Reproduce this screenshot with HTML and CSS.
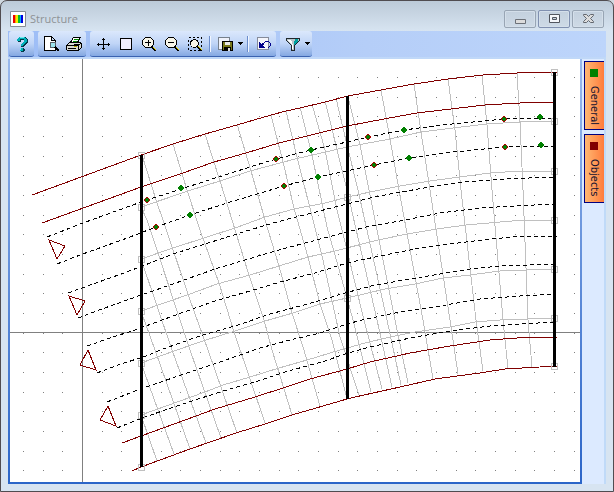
FILE: index.html
```html
<!DOCTYPE html>
<html lang="en">
<head>
<meta charset="utf-8">
<title>Structure</title>
<link rel="stylesheet" href="styles.css">
</head>
<body>
<main class="window">
  <header class="titlebar">
    <svg class="app-icon" viewBox="0 0 16 16" aria-hidden="true">
      <path fill="#fff" stroke="#858d94" d="M.5.5h15v15H.5z"/>
      <path fill="#e00" d="M3 4h2v8H3z"/><path fill="#f90" d="M5 4h1v8H5z"/><path fill="#ee0" d="M6 4h2v8H6z"/><path fill="#0b3" d="M8 4h2v8H8z"/><path fill="#0af" d="M10 4h1v8h-1z"/><path fill="#00d" d="M11 4h2v8h-2z"/>
    </svg>
    <h1 class="title">Structure</h1>
    <div class="controls">
      <button class="control" type="button" aria-label="Minimize"><svg viewBox="0 0 14 12"><path fill="#dcdcdc" stroke="#6c7178" d="M2.500 6.500h10v4h-10z"/></svg></button>
      <button class="control control-max" type="button" aria-label="Maximize"><svg viewBox="0 0 14 12"><path fill="#f4f6fa" stroke="#52565f" fill-rule="evenodd" d="M2.500 1.500h10v8h-10zM5.500 4.500h4v2h-4z"/></svg></button>
      <button class="control" type="button" aria-label="Close"><svg viewBox="0 0 14 12"><path fill="#dcdcdc" stroke="#62676e" d="M2.500 1.500h3l2 2 2-2h3v1l-3 3 3 3v1h-3l-2-2-2 2h-3v-1l3-3-3-3z"/></svg></button>
    </div>
  </header>

  <div class="toolbar">
    <div class="group">
      <button class="tool" type="button" aria-label="Help"><svg viewBox="0 0 16 16" shape-rendering="crispEdges"><path fill="#003848" d="M6 1h6v1h1v1h1v4h-1v1h-1v1h-1v1h-1v1H7V9h1V8h1V7h1V4H7v2H4V3h1V2h1zM7 12h3v1h1v2h-1v1H7z"/><path fill="#00b0b8" d="M5 1h6v1h1v1h1v3h-1v1h-1v1h-1v1H9v1H7V8h1V7h1V6h1V3H6v2H3V3h1V2h1zM6 12h3v3H6z"/><path fill="#6eeaf0" d="M6 1h4v1H6zM6 12h1v2H6z"/></svg></button>
    </div>
    <div class="group">
      <button class="tool" type="button" aria-label="Print preview"><svg viewBox="0 0 16 16" shape-rendering="crispEdges"><path fill="#fff" stroke="#000" d="M1.500.5h7l4 4v10h-11zM8.500.5v4h4"/><circle cx="10" cy="9" r="3" fill="#9ce4ee" stroke="#5a6067"/><path stroke="#000" stroke-width="2" d="M12 11l4 4"/></svg></button>
      <button class="tool" type="button" aria-label="Print"><svg viewBox="0 0 16 16" shape-rendering="crispEdges"><path fill="#d8d8d0" stroke="#000" d="M.5 9.500l3-3h10l2 1v4l-3 3h-11l-1-1z"/><path fill="#fff" stroke="#000" d="M4.500 6.500l3-5h7l-3 5z"/><path stroke="#080" d="M8 3.500h5M7 5.500h4"/><path stroke="#000" d="M0 9.500h12l3-2M12.500 10v4M2 12.500h8"/><path stroke="#bba900" d="M8 10.500h3"/></svg></button>
    </div>
    <div class="group">
      <button class="tool" type="button" aria-label="Move"><svg viewBox="0 0 16 16" shape-rendering="crispEdges"><path stroke="#000" d="M8.500 2v12M2 8.500h13M7 3.500h3M7 12.500h3M3.500 7v3M13.500 7v3"/></svg></button>
      <button class="tool" type="button" aria-label="Full view"><svg viewBox="0 0 16 16" shape-rendering="crispEdges"><path fill="#f1efff" stroke="#000" d="M2.500 2.500h11v11h-11z"/></svg></button>
      <button class="tool" type="button" aria-label="Zoom in"><svg viewBox="0 0 16 16" shape-rendering="crispEdges"><path fill="#f7f5e8" stroke="#000" d="M4.500 1.500h5l3 3v4l-3 3h-5l-3-3v-4z"/><path stroke="#000" d="M4 6.500h6M7.500 4v6"/><path stroke="#000" stroke-width="2" d="M11 11l4 4"/><path stroke="#eedc00" d="M12 11l3 3"/></svg></button>
      <button class="tool" type="button" aria-label="Zoom out"><svg viewBox="0 0 16 16" shape-rendering="crispEdges"><path fill="#f7f5e8" stroke="#000" d="M4.500 1.500h5l3 3v4l-3 3h-5l-3-3v-4z"/><path stroke="#000" d="M4 6.500h6"/><path stroke="#000" stroke-width="2" d="M11 11l4 4"/><path stroke="#eedc00" d="M12 11l3 3"/></svg></button>
      <button class="tool" type="button" aria-label="Zoom to area"><svg viewBox="0 0 16 16" shape-rendering="crispEdges"><path fill="none" stroke="#000" stroke-dasharray="2 2" d="M1.500 1.500h13v13h-13z"/><circle cx="7.500" cy="7.500" r="4" fill="#f7f5e8" stroke="#000"/><path stroke="#000" stroke-width="2" d="M10 10l5 5"/><path stroke="#eedc00" d="M11 10l4 4"/></svg></button>
      <span class="separator"></span>
      <button class="tool" type="button" aria-label="Save"><svg viewBox="0 0 16 16" shape-rendering="crispEdges"><path fill="#eef1fb" stroke="#77808c" d="M.5 1.500h11v12H.5z"/><path fill="#77771a" stroke="#000" d="M4.500 5.500h10v9h-10z"/><path fill="#e8e8e8" d="M7 6h5v3H7z"/><path d="M6 11h7v4H6z"/><path fill="#ddd" d="M10 12h2v3h-2z"/></svg></button>
      <button class="caret" type="button" aria-label="Save options"><svg viewBox="0 0 5 3" shape-rendering="crispEdges"><path d="M0 0h5v1H0zM1 1h3v1H1zM2 2h1v1H2z"/></svg></button>
      <span class="separator"></span>
      <button class="tool" type="button" aria-label="Undo"><svg viewBox="0 0 16 16" shape-rendering="crispEdges"><path fill="#f4f5fc" stroke="#858b9a" d="M1.500 1.500h11v12h-11z"/><path fill="#00008b" d="M3 6h1v1h1v1h1V7h1v1h1v1H7v1h1v1h1v1H3z"/><path fill="none" stroke="#00008b" d="M7 7.500h1M8 6.500h1M9 5.500h4M13.500 6v1M14.500 7v3M13.500 10v1M12 11.500h1"/></svg></button>
    </div>
    <div class="group">
      <button class="tool" type="button" aria-label="Filter"><svg viewBox="0 0 16 16" shape-rendering="crispEdges"><path fill="#b9c5cb" stroke="#20282c" d="M1.500 2.500h13v2l-5 5v5h-3v-5l-5-5z"/><path fill="#fff" d="M3 4h3l2 5v4H7V9z"/><path fill="#00a0a0" d="M10 3h3v2l-4 4V7z"/></svg></button>
      <button class="caret" type="button" aria-label="Filter options"><svg viewBox="0 0 5 3" shape-rendering="crispEdges"><path d="M0 0h5v1H0zM1 1h3v1H1zM2 2h1v1H2z"/></svg></button>
    </div>
  </div>

  <div class="workspace">
    <div class="canvas">
      <svg class="drawing" viewBox="10 59 570 423" role="img" aria-label="Structure drawing" shape-rendering="crispEdges">
        <defs>
          <path id="dots" stroke="#808080" d="M23 .5h1m19 0h1m18 0h1m19 0h1m19 0h1m18 0h1m19 0h1m19 0h1m18 0h1m19 0h1m19 0h1m18 0h1m19 0h1m19 0h1m18 0h1m19 0h1m19 0h1m18 0h1m19 0h1m19 0h1m18 0h1m19 0h1m19 0h1m18 0h1m19 0h1m19 0h1m18 0h1m19 0h1m19 0h1"/>
          <path id="node" d="M-3-3h6v6h-6z"/>
          <path id="mark" d="M-1-3h2v1h1v1h1v2h-1v1h-1v1h-2v-1h-1v-1h-1v-2h1v-1h1z"/>
          <path id="core" d="M-1-2h2v1h1v2h-1v1h-2v-1h-1v-2h1z"/>
        </defs>
        <!-- grid -->
        <use href="#dots" y="77"/><use href="#dots" y="97"/><use href="#dots" y="116"/><use href="#dots" y="136"/><use href="#dots" y="156"/><use href="#dots" y="175"/><use href="#dots" y="195"/><use href="#dots" y="215"/><use href="#dots" y="234"/><use href="#dots" y="254"/><use href="#dots" y="274"/><use href="#dots" y="293"/><use href="#dots" y="313"/><use href="#dots" y="333"/><use href="#dots" y="352"/><use href="#dots" y="372"/><use href="#dots" y="392"/><use href="#dots" y="411"/><use href="#dots" y="431"/><use href="#dots" y="451"/><use href="#dots" y="470"/>
        <path class="axis" d="M82.500 59v423M10 332.500h570"/>
        <!-- longitudinal and transverse members -->
        <g class="mesh">
          <path d="M141 207L188 191 220 181 250 171 295 159 347 147 390 139 421 132 453 128 487 124 520 122 554 121"/>
          <path d="M141 259L173 248 204 238 235 228 265 217 294 209 325 203 348 197 370 192 400 186 430 181 460 177 490 173 520 171H554"/>
          <path d="M141 311L190 294 217 284 250 275 279 266 308 257 335 251 378 240 407 234 437 229 466 225 500 222 525 220H554"/>
          <path d="M141 363L174 351 203 341 235 331 265 321 293 313 320 304 347 298 385 289 415 284 443 278 470 275 500 271 554 269"/>
          <path d="M141 415L180 401 205 392 223 385 250 377 279 368 307 360 340 350 365 343 390 337 415 332 450 327 475 322 500 320 554 318"/>
          <path d="M141 415L157 461M141 363L174 454M141 311L155 350 190 449M141 259L172 350 206 443M141 207L147 220 190 350 221 438"/>
          <path d="M142 155L157 203 163 220 190 300 208 350 237 433"/>
          <path d="M173 144L187 190 200 230 219 283 234 332 265 423"/>
          <path d="M205 134L220 181 232 220 248 272 264 320 272 350 292 415"/>
          <path d="M237 124L251 171 265 220 279 266 292 313 304 350 320 406"/>
          <path d="M271 115L284 166 294 208 308 257 320 304 332 340 347 399"/>
          <path d="M286 111L297 157 313 220 323 260 340 337 359 395"/>
          <path d="M300 107L312 155 322 203 327 227 342 280 353 320 371 392"/>
          <path d="M312 104L325 150 337 210 347 250 364 320 382 389"/>
          <path d="M325 101L347 190 377 320 392 387"/>
          <path d="M336 98L347 145 358 190 387 320 401 385"/>
          <path d="M348 97L360 145 369 190 395 320 408 383"/>
          <path d="M381 90L390 139 399 190 423 320 433 379"/>
          <path d="M414 84L421 132 430 190 450 320 458 374"/>
          <path d="M448 79L455 130 461 190 476 320 483 371"/>
          <path d="M482 75L487 125 492 190 503 320 508 369"/>
          <path d="M517 73L520 122 523 190 528 320 532 367"/>
        </g>
        <g class="hidden-edge">
          <path d="M47 237L83 223 141 202 181 189 253 166 276 159 311 150 347 142 368 137 404 130 442 125 504 119 540 118H557"/>
          <path d="M57 264L80 255 130 237 156 227 190 215 227 203 284 186 318 177 374 165 409 158 443 153 505 147 541 146H557"/>
          <path d="M68 293L110 278 140 267 173 254 205 244 240 233 273 223 300 216 347 204 370 198 395 193 430 187 465 182 505 179 554 177"/>
          <path d="M78 318L102 309 141 295 173 284 215 269 245 260 275 251 305 243 347 232 370 226 400 221 440 213 480 208 515 206 554 204"/>
          <path d="M87 346L110 338 132 331 143 327 184 312 215 301 250 291 280 282 315 273 347 263 380 256 415 249 450 244 490 239 525 236H557"/>
          <path d="M97 373L118 365 146 356 163 349 200 336 238 325 270 314 315 302 345 293 375 285 416 278 470 269 500 266 554 264"/>
          <path d="M107 402L143 388 190 372 220 362 260 348 290 340 320 333 347 324 366 319 405 311 440 306 480 299 520 296 554 294"/>
          <path d="M117 428L142 418 180 405 223 391 255 382 285 372 325 361 345 354 370 347 410 338 450 331 490 326 520 324 557 322"/>
        </g>
        <g class="edge">
          <path d="M32 195L141 155 173 144 205 134 237 125 271 115 286 111 300 108 325 102 348 96 381 90 414 84 448 79 483 75 517 73 541 72H557"/>
          <path d="M42 223L141 187 180 174 214 162 246 153 279 143 307 136 347 126 384 119 417 113 451 109 485 105 520 103 557 102"/>
          <path d="M122 443L141 436 163 428 185 420 215 409 255 397 283 388 310 379 347 369 370 362 410 353 450 346 490 340 530 337H557"/>
          <path d="M132 471L141 467 190 449 236 433 265 424 292 415 347 399 355 397 400 387 435 379 480 373 505 369 557 366"/>
          <path d="M49 240L65 246 57 259zM69 296L85 301 77 315zM88 350L80 365 96 370zM108 406L100 420 116 426z"/>
        </g>
        <g class="nodes">
          <use href="#node" x="141.500" y="155.500"/><use href="#node" x="141.500" y="207.500"/><use href="#node" x="141.500" y="259.500"/><use href="#node" x="141.500" y="311.500"/><use href="#node" x="141.500" y="363.500"/><use href="#node" x="141.500" y="415.500"/><use href="#node" x="141.500" y="467.500"/>
          <use href="#node" x="347.500" y="197.500"/><use href="#node" x="347.500" y="298.500"/>
          <use href="#node" x="554.500" y="72.500"/><use href="#node" x="554.500" y="121.500"/><use href="#node" x="554.500" y="171.500"/><use href="#node" x="554.500" y="220.500"/><use href="#node" x="554.500" y="269.500"/><use href="#node" x="554.500" y="318.500"/><use href="#node" x="554.500" y="366.500"/>
        </g>
        <path class="bulkhead" d="M141.500 155v312M347.500 96v303M554.500 72v295"/>
        <g fill="#b00000">
          <use href="#mark" x="147" y="200"/><use href="#mark" x="156" y="227"/><use href="#mark" x="276" y="159"/><use href="#mark" x="284" y="186"/><use href="#mark" x="368" y="137"/><use href="#mark" x="374" y="165"/><use href="#mark" x="504" y="119"/><use href="#mark" x="505" y="147"/>
        </g>
        <g fill="#008000">
          <use href="#core" x="147" y="200"/><use href="#core" x="156" y="227"/><use href="#core" x="276" y="159"/><use href="#core" x="284" y="186"/><use href="#core" x="368" y="137"/><use href="#core" x="374" y="165"/><use href="#core" x="504" y="119"/><use href="#core" x="505" y="147"/>
          <use href="#mark" x="181" y="188"/><use href="#mark" x="190" y="215"/><use href="#mark" x="311" y="150"/><use href="#mark" x="318" y="177"/><use href="#mark" x="404" y="130"/><use href="#mark" x="409" y="158"/><use href="#mark" x="540" y="117"/><use href="#mark" x="541" y="145"/>
        </g>
      </svg>
    </div>
    <nav class="tabs" aria-label="Panels">
      <button class="tab" type="button"><span class="swatch swatch-general"></span>General</button>
      <button class="tab" type="button"><span class="swatch swatch-objects"></span>Objects</button>
    </nav>
  </div>
</main>
</body>
</html>
```

FILE: styles.css
```css
* { box-sizing: border-box; }

body {
  margin: 0;
  background: #cfd8e0;
  font-family: "Open Sans", "Noto Sans", sans-serif;
}

.window {
  display: flex;
  flex-direction: column;
  min-height: 100vh;
  padding: 0 7px 7px;
  border: 1px solid #504c50;
  border-radius: 7px 7px 0 0;
  background: linear-gradient(#bccad8, #d7e4f1 30px);
}

.titlebar {
  display: flex;
  align-items: center;
  height: 30px;
  padding: 6px 2px 0;
}

.app-icon { width: 16px; height: 16px; }

.title {
  flex: 1;
  margin: 0 0 0 4px;
  color: #8e9295;
  font-size: 11px;
  line-height: 16px;
  font-weight: 400;
}

.controls { display: flex; gap: 2px; }

.control {
  display: flex;
  align-items: center;
  justify-content: center;
  width: 32px;
  height: 18px;
  padding: 0;
  border: 1px solid #98a5b4;
  border-radius: 2px;
  background: linear-gradient(#c3d0de, #cedae6);
  box-shadow: inset 0 0 0 1px #d4dfea;
}

.control-max { border-color: #8090b0; }
.control svg { width: 14px; height: 12px; }

.toolbar {
  display: flex;
  gap: 4px;
  height: 26px;
  background: linear-gradient(90deg, #9dbdf6, #b5cef8 60%, #bdd5fb);
  padding-left: 1px;
}

.group {
  display: flex;
  align-items: center;
  padding: 0 1px;
  border-bottom: 1px solid #3a62b0;
  border-radius: 3px;
  background: linear-gradient(#dbe8fc, #c0d5f7 50%, #84a8e2);
}

.tool,
.caret {
  display: flex;
  align-items: center;
  justify-content: center;
  width: 23px;
  height: 24px;
  padding: 0;
  border: 0;
  background: none;
}

.tool svg { width: 16px; height: 16px; }
.caret { width: 7px; }
.caret svg { width: 5px; height: 3px; }

.separator {
  width: 2px;
  height: 16px;
  margin: 0 3px;
  border-left: 1px solid #6a8ccb;
  background: #f1f6ff;
}

.workspace {
  display: flex;
  flex: 1;
  border-top: 2px solid #c0d8f8;
  border-right: 2px solid #c0daf8;
}

.canvas {
  flex: 1;
  border: solid #2b65c8;
  border-width: 0 2px 2px;
  border-image: linear-gradient(#9ab9ec, #2b65c8) 2;
  background: #fff;
}

.drawing { display: block; width: 100%; fill: none; }
.axis { stroke: #808080; }
.mesh, .nodes { stroke: #c0c0c0; }
.hidden-edge { stroke: #000; stroke-dasharray: 4 3; }
.edge { stroke: #800000; }
.bulkhead { stroke: #000; stroke-width: 3px; }

.tabs {
  display: flex;
  flex-direction: column;
  gap: 4px;
  width: 22px;
  padding: 2px 0 0 2px;
  background: #dceaff;
}

.tab {
  display: flex;
  align-items: center;
  gap: 9px;
  height: 69px;
  padding: 7px 2px 0 0;
  border: 1px solid #000080;
  border-right: 0;
  background: linear-gradient(90deg, #ffb873, #ff7c3c);
  color: #101030;
  font-family: "DejaVu Sans Condensed", "DejaVu Sans", sans-serif;
  font-size: 11px;
  line-height: 16px;
  writing-mode: vertical-rl;
}

.swatch { width: 8px; height: 8px; }
.swatch-general { background: #008000; }
.swatch-objects { background: #800000; }
```
